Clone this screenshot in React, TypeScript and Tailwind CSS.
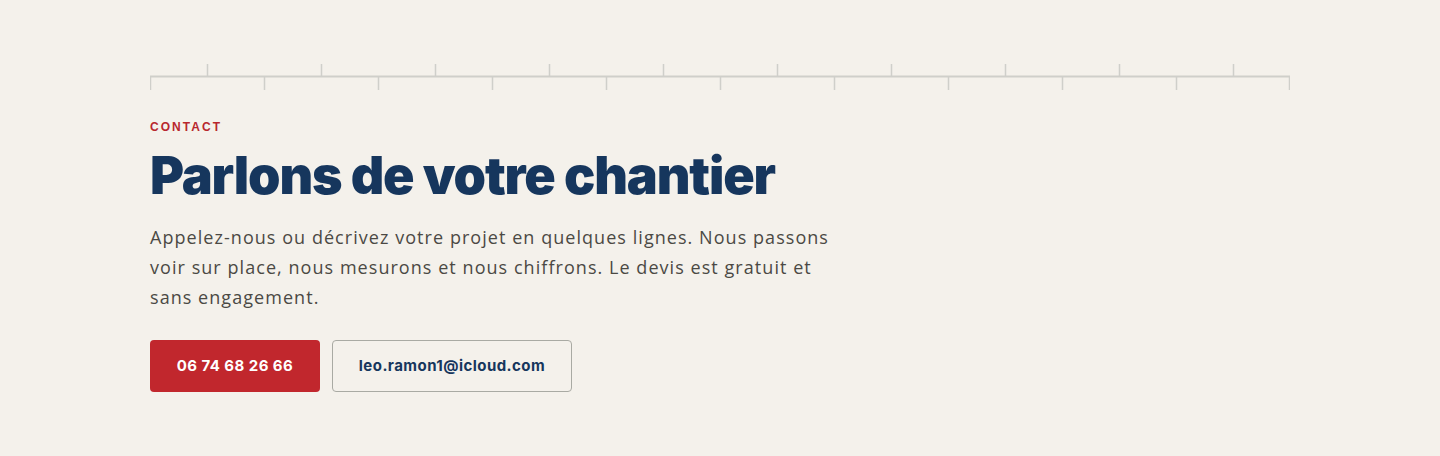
export default function App() {
  const ticks = Array.from({ length: 11 }, (_, i) => i * 114);

  return (
    <section className="min-h-[456px] bg-[#f4f1eb] pt-16">
      <div className="mx-auto w-[1140px]">
        {/* ruler */}
        <svg width="1140" height="26" viewBox="0 0 1140 26" className="block">
          <line x1="0" y1="12.5" x2="1140" y2="12.5" stroke="#cfcfca" strokeWidth="2" />
          {ticks.map((x) => (
            <line key={"b" + x} x1={x === 1140 ? 1139.5 : x + 0.5} y1="12" x2={x === 1140 ? 1139.5 : x + 0.5} y2="26" stroke="#cfcfca" strokeWidth="1.5" />
          ))}
          {ticks.slice(0, 10).map((x) => (
            <line key={"t" + x} x1={x + 57.5} y1="0" x2={x + 57.5} y2="13" stroke="#cfcfca" strokeWidth="1.5" />
          ))}
        </svg>

        <p className="mt-[29px] text-[12px] font-bold uppercase leading-4 tracking-[0.17em] text-[#b8272e] font-['Liberation_Sans',sans-serif]">
          Contact
        </p>

        <h2 className="mt-[10px] text-[52px] font-black leading-[62px] tracking-[-0.022em] text-[#16365d] font-['Inter',sans-serif]">
          Parlons de votre chantier
        </h2>

        <p className="mt-[15px] max-w-[690px] text-[18px] leading-[30px] tracking-[1.05px] text-[#4b4944] font-['Open_Sans',sans-serif]">
          Appelez-nous ou décrivez votre projet en quelques lignes. Nous passons voir sur place, nous mesurons et nous
          chiffrons. Le devis est gratuit et sans engagement.
        </p>

        <div className="mt-[28px] flex gap-3 font-['Inter',sans-serif]">
          <a
            href="tel:0674682666"
            className="flex h-[52px] w-[170px] items-center justify-center rounded-[4px] bg-[#c1272d] text-[15px] font-bold tracking-[0.03em] text-white"
          >
            06 74 68 26 66
          </a>
          <a
            href="mailto:leo.ramon1@icloud.com"
            className="flex h-[52px] w-[240px] items-center justify-center rounded-[4px] border border-[#a9aaa3] text-[15px] font-bold tracking-[0.03em] text-[#16365d]"
          >
            leo.ramon1@icloud.com
          </a>
        </div>
      </div>
    </section>
  );
}
